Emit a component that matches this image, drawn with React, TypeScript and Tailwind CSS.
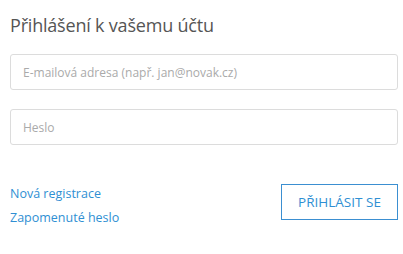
export default function App() {
  return (
    <div className="w-[403px] h-[254px] bg-white px-[10px] pt-[13px]" style={{ fontFamily: '"Open Sans", "Noto Sans", sans-serif' }}>
      <h1 className="text-[18px] leading-[24px] text-[#555555] font-normal tracking-[-0.2px]">Přihlášení k vašemu účtu</h1>
      <div className="mt-[17px] flex flex-col gap-[19px] w-[388px]">
        <input
          className="h-[36px] w-full border border-[#dcdcdc] rounded-[3px] px-[12px] text-[12px] placeholder:text-[#aaaaaa] outline-none"
          placeholder="E-mailová adresa (např. jan@novak.cz)"
        />
        <input
          className="h-[36px] w-full border border-[#dcdcdc] rounded-[3px] px-[12px] text-[12px] placeholder:text-[#aaaaaa] outline-none"
          placeholder="Heslo"
          type="password"
        />
      </div>
      <div className="mt-[39px] flex justify-between items-start w-[388px]">
        <div className="flex flex-col gap-[10px] pt-[3px] text-[12.5px] leading-[14px] text-[#2f8fd3]">
          <a href="#">Nová registrace</a>
          <a href="#">Zapomenuté heslo</a>
        </div>
        <button className="w-[117px] h-[36px] border border-[#3b8fd1] text-[#2f8fd3] text-[13.5px]">PŘIHLÁSIT SE</button>
      </div>
    </div>
  );
}
